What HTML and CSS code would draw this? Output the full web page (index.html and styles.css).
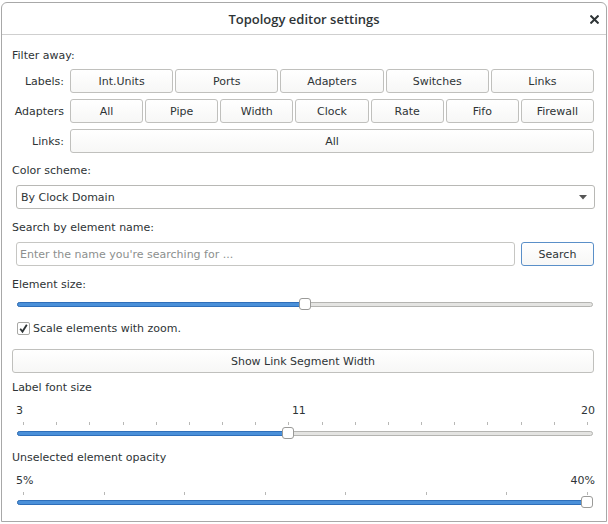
FILE: index.html
```html
<!DOCTYPE html>
<html>
<head>
<meta charset="utf-8">
<link rel="stylesheet" href="styles.css">
</head>
<body>
<div class="win">
  <div class="titlebar">
    <span class="title">Topology editor settings</span>
    <span class="close"><svg width="9" height="9" viewBox="0 0 9 9"><path d="M1.2 1.2 L7.8 7.8 M7.8 1.2 L1.2 7.8" stroke="#2e3436" stroke-width="2" stroke-linecap="square"/></svg></span>
  </div>
  <div class="content">
    <div class="lbl first">Filter away:</div>
    <div class="frow">
      <div class="flabel">Labels:</div>
      <div class="btns">
        <div class="btn">Int.Units</div><div class="btn">Ports</div><div class="btn">Adapters</div><div class="btn">Switches</div><div class="btn">Links</div>
      </div>
    </div>
    <div class="frow">
      <div class="flabel">Adapters</div>
      <div class="btns">
        <div class="btn">All</div><div class="btn">Pipe</div><div class="btn">Width</div><div class="btn">Clock</div><div class="btn">Rate</div><div class="btn">Fifo</div><div class="btn">Firewall</div>
      </div>
    </div>
    <div class="frow">
      <div class="flabel">Links:</div>
      <div class="btns"><div class="btn">All</div></div>
    </div>

    <div class="lbl sec first-sec">Color scheme:</div>
    <div class="combo"><span>By Clock Domain</span><svg width="8" height="5" viewBox="0 0 8 5"><path d="M0 0 H8 L4 4.5 Z" fill="#555"/></svg></div>

    <div class="lbl sec">Search by element name:</div>
    <div class="search">
      <div class="input">Enter the name you're searching for ...</div>
      <div class="btn sbtn">Search</div>
    </div>

    <div class="lbl sec">Element size:</div>
    <div class="slider s1">
      <div class="track"></div>
      <div class="fill" style="width:calc(6px + (100% - 12px) * 0.5)"></div>
      <div class="rail"><div class="thumb" style="left:50%"></div></div>
    </div>

    <div class="check"><span class="box"><svg width="11" height="11" viewBox="0 0 11 11"><path d="M2.2 5.8 L4.5 8.6 L8.8 1.8" stroke="#2e3436" stroke-width="1.8" fill="none"/></svg></span>Scale elements with zoom.</div>

    <div class="btn wide">Show Link Segment Width</div>

    <div class="lbl sec2">Label font size</div>
    <div class="vals">
      <span class="v start">3</span>
      <span class="v mid" style="left:47.06%">11</span>
      <span class="v end">20</span>
    </div>
    <div class="ticks">
      <i></i><i></i><i></i><i></i><i></i><i></i><i></i><i></i><i></i><i></i><i></i><i></i><i></i><i></i><i></i><i></i><i></i><i></i>
    </div>
    <div class="slider s2">
      <div class="track"></div>
      <div class="fill" style="width:calc(6px + (100% - 12px) * 0.4706)"></div>
      <div class="rail"><div class="thumb" style="left:47.06%"></div></div>
    </div>

    <div class="lbl sec3">Unselected element opacity</div>
    <div class="vals">
      <span class="v start">5%</span>
      <span class="v end">40%</span>
    </div>
    <div class="ticks">
      <i></i><i></i><i></i><i></i><i></i><i></i><i></i><i></i>
    </div>
    <div class="slider s3">
      <div class="track"></div>
      <div class="fill" style="width:100%"></div>
      <div class="rail"><div class="thumb" style="left:100%"></div></div>
    </div>
  </div>
</div>
</body>
</html>
```

FILE: styles.css
```css
html, body {
  margin: 0;
  padding: 0;
}
body {
  background: #ffffff;
  padding: 2px 1px 0 1px;
  font-family: "DejaVu Sans", sans-serif;
  font-size: 11px;
  color: #2e3436;
  width: 608px;
  height: 524px;
  box-sizing: border-box;
  overflow: hidden;
}
.win {
  border: 1px solid #a8a8a8;
  border-radius: 6px 6px 0 0;
  background: #fff;
  height: 520px;
  box-sizing: border-box;
}
.titlebar {
  height: 31px;
  border-bottom: 1px solid #cfcfcf;
  display: flex;
  align-items: center;
  justify-content: center;
  position: relative;
}
.title {
  font-family: "Open Sans", "DejaVu Sans", sans-serif;
  font-weight: 600;
  font-size: 13px;
  color: #2e3436;
  margin-top: 1px;
}
.close {
  position: absolute;
  right: 7px;
  top: 12px;
  width: 9px;
  height: 9px;
  display: block;
}
.close svg { display: block; }
.content {
  padding: 0 12px 0 10px;
}
.lbl {
  height: 16px;
  line-height: 16px;
}
.lbl.first { margin-top: 13px; margin-bottom: 5px; }
.lbl.sec { margin-top: 11px; margin-bottom: 6px; }
.lbl.sec.first-sec { margin-top: 10px; }
.lbl.sec2 { margin-top: 7px; }
.lbl.sec3 { margin-top: 14px; }

.frow {
  display: flex;
  align-items: center;
  height: 24px;
  margin-bottom: 6px;
}
.flabel {
  width: 52px;
  text-align: right;
  margin-right: 6px;
}
.btns {
  flex: 1;
  display: flex;
  gap: 2px;
  height: 100%;
}
.btn {
  flex: 1;
  border: 1px solid #c0c0bd;
  border-radius: 3px;
  background: linear-gradient(#ffffff, #f7f7f6);
  display: flex;
  align-items: center;
  justify-content: center;
  box-sizing: border-box;
  height: 24px;
}
.combo {
  margin-left: 4px;
  margin-right: -1px;
  height: 24px;
  border: 1px solid #b8b8b5;
  border-radius: 3px;
  box-sizing: border-box;
  display: flex;
  align-items: center;
  justify-content: space-between;
  padding: 0 7px 0 4px;
}
.combo svg { display: block; }
.search {
  margin-left: 4px;
  display: flex;
  gap: 6px;
  height: 24px;
}
.input {
  flex: 1;
  border: 1px solid #c6c6c3;
  border-radius: 3px;
  box-sizing: border-box;
  color: #8c8f8e;
  display: flex;
  align-items: center;
  padding-left: 3px;
}
.btn.sbtn {
  flex: 0 0 73px;
  border-color: #5a8fc8;
}
.slider {
  position: relative;
  margin-left: 5px;
  margin-right: 1px;
  height: 5px;
}
.slider.s1 { margin-top: 9px; }
.slider.s2 { margin-top: 6px; }
.slider.s3 { margin-top: 5px; }
.track {
  position: absolute;
  left: 0; right: 0; top: 0;
  height: 5px;
  border: 1px solid #b4b4b1;
  border-radius: 3px;
  background: #e4e4e2;
  box-sizing: border-box;
}
.fill {
  position: absolute;
  left: 0; top: 0;
  height: 5px;
  border: 1px solid #2f6fba;
  background: #4a90d9;
  border-radius: 3px;
  box-sizing: border-box;
}
.rail {
  position: absolute;
  left: 6px; right: 6px; top: 0;
  height: 5px;
}
.thumb {
  position: absolute;
  top: -4px;
  width: 12px;
  height: 12px;
  margin-left: -6px;
  background: #fff;
  border: 1px solid #9a9a98;
  border-radius: 3px;
  box-sizing: border-box;
}
.check {
  margin-top: 13px;
  margin-left: 5px;
  display: flex;
  align-items: center;
  height: 16px;
  gap: 3px;
}
.box {
  width: 13px;
  height: 13px;
  border: 1px solid #a8a8a5;
  border-radius: 2px;
  box-sizing: border-box;
  display: flex;
  align-items: center;
  justify-content: center;
}
.box svg { display: block; }
.btn.wide {
  margin-top: 13px;
}
.vals {
  position: relative;
  height: 16px;
  line-height: 16px;
  margin-top: 7px;
  margin-left: 11px;
  margin-right: 6px;
}
.v {
  position: absolute;
  top: 0;
}
.v.start { left: -7px; }
.v.mid { transform: translateX(-50%); margin-left: 10px; }
.v.end { right: -7px; }
.ticks {
  display: flex;
  justify-content: space-between;
  height: 3px;
  margin: 3px 6px 0 11px;
}
.ticks i {
  display: block;
  width: 1px;
  height: 3px;
  background: #b8b8b6;
}
```
